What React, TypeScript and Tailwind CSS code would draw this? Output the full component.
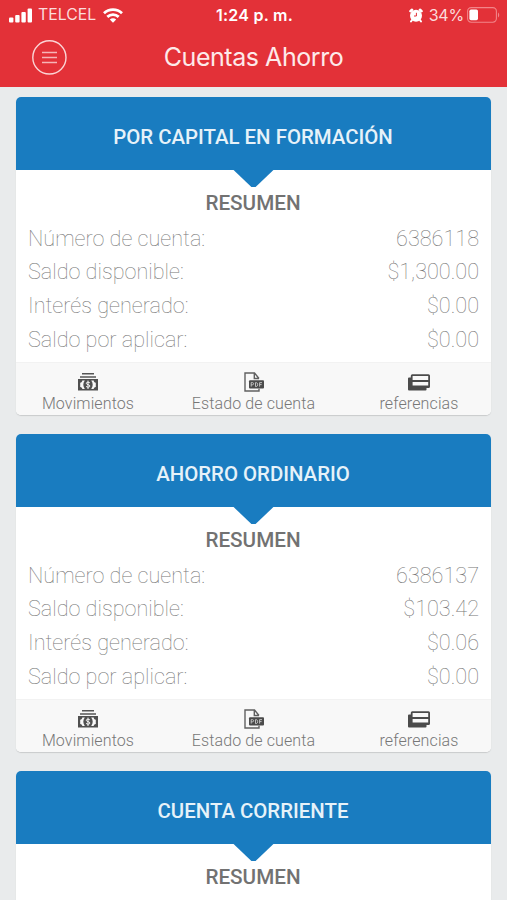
import React from "react";

type Account = { title: string; rows: [string, string][] };

const labels = ["Número de cuenta:", "Saldo disponible:", "Interés generado:", "Saldo por aplicar:"];

const build = (title: string, values: string[]): Account => ({
  title,
  rows: values.map((v, i) => [labels[i], v]),
});

const accounts: Account[] = [
  build("POR CAPITAL EN FORMACIÓN", ["6386118", "$1,300.00", "$0.00", "$0.00"]),
  build("AHORRO ORDINARIO", ["6386137", "$103.42", "$0.06", "$0.00"]),
  build("CUENTA CORRIENTE", []),
];

function SignalIcon() {
  return (
    <svg width="23" height="15" viewBox="0 0 23 15" fill="#fff">
      <rect x="0" y="9.5" width="4.4" height="5" rx="1" />
      <rect x="6.2" y="7" width="4.4" height="7.5" rx="1" />
      <rect x="12.4" y="4" width="4.4" height="10.5" rx="1" />
      <rect x="18.6" y="0.5" width="4.4" height="14" rx="1" />
    </svg>
  );
}

function WifiIcon() {
  return (
    <svg width="20" height="15" viewBox="0 0 20 15" fill="none" stroke="#fff" strokeWidth="2.8">
      <path d="M1 5.2C6 .5 14 .5 19 5.2" />
      <path d="M4.3 8.9c3.3-3 8.1-3 11.4 0" />
      <path d="M10 14.8 6.8 11.6c1.8-1.7 4.6-1.7 6.4 0Z" fill="#fff" stroke="none" />
    </svg>
  );
}

function AlarmIcon() {
  return (
    <svg width="14" height="15" viewBox="0 0 14 15" fill="none">
      <path d="M1.5 3.2 3 1.8M12.5 3.2 11 1.8" stroke="#fff" strokeWidth="2.6" strokeLinecap="round" />
      <path d="M3 12l-1 1.5M11 12l1 1.5" stroke="#fff" strokeWidth="2" strokeLinecap="round" />
      <circle cx="7" cy="7.7" r="6" fill="#fff" />
      <path d="M7.4 4.8V8H5" stroke="#e33138" strokeWidth="1" />
    </svg>
  );
}

function BatteryIcon() {
  return (
    <svg width="33" height="16" viewBox="0 0 33 16" fill="none">
      <rect x="0.6" y="0.6" width="28.8" height="14.6" rx="3.6" stroke="#f28589" strokeWidth="1.1" />
      <rect x="2.4" y="2.6" width="8.6" height="10.6" rx="1.6" fill="#fff" />
      <path d="M31 5.5c1.6.7 1.6 4.3 0 5Z" fill="#f28589" />
    </svg>
  );
}

function MenuIcon() {
  return (
    <svg width="36" height="36" viewBox="0 0 36 36" fill="none" stroke="#fbd5d6">
      <circle cx="18.4" cy="18.4" r="16.6" strokeWidth="1.4" />
      <path d="M11 13.5h15M11 18.5h15M11 23.5h15" stroke="#f6b5b7" strokeWidth="1.3" />
    </svg>
  );
}

function CashIcon() {
  return (
    <svg width="20" height="18" viewBox="0 0 20 18" fill="none">
      <path d="M4 .8h12M2 3.9h16" stroke="#555" strokeWidth="1.5" />
      <path d="M0 6h20v11.5H0Z" fill="#505050" />
      <path d="M4.3 7.6h2.5c-2 2.3-2 6 0 8.3H4.3c0-1-.8-1.9-2.1-2V9.7c1.3 0 2.1-1 2.1-2.1ZM15.7 7.6h-2.5c2 2.3 2 6 0 8.3h2.5c0-1 .8-1.9 2.1-2V9.7c-1.3 0-2.1-1-2.1-2.1Z" fill="#f8f8f8" />
      <path d="M11.9 9.9c-.7-.8-3.6-1.1-3.6.4 0 1.7 3.6 1 3.6 2.7 0 1.6-2.9 1.4-3.8.4M10 7.6v8.4" stroke="#f8f8f8" strokeWidth="1" />
    </svg>
  );
}

function PdfIcon() {
  return (
    <svg width="20" height="20" viewBox="0 0 20 20" fill="none">
      <path d="M15 6.5 10.5 1H1v18h14v-2.3M10.3 1v5.5H15" stroke="#606060" strokeWidth="1.4" />
      <rect x="5" y="8.3" width="15" height="8.2" rx="1" fill="#4b4b4b" />
      <path d="M7.2 14.6v-4h1.3c1.5 0 1.5 2.2 0 2.2H7.2M11.5 10.6v4h.8c1.8 0 1.8-4 0-4ZM15.6 14.6v-4H18M15.6 12.6h2" stroke="#ccc" strokeWidth=".9" />
    </svg>
  );
}

function CardsIcon() {
  return (
    <svg width="22" height="17" viewBox="0 0 22 17" fill="none">
      <path d="M0 4.5Q0 3.5 1 3.5H4V13h14.5v2.7q0 .8-1 .8H1q-1 0-1-1Z" fill="#4b4b4b" />
      <rect x="3.7" y="1.2" width="17.4" height="11.8" rx=".6" fill="#f8f8f8" stroke="#4b4b4b" strokeWidth="1.8" />
      <path d="M4 7h17" stroke="#4b4b4b" strokeWidth="2.2" />
      <path d="M4 12.3h17" stroke="#4b4b4b" strokeWidth="1.5" />
    </svg>
  );
}

const actions = [
  { label: "Movimientos", icon: <CashIcon />, width: "w-[144px]" },
  { label: "Estado de cuenta", icon: <PdfIcon />, width: "w-[187px]" },
  { label: "referencias", icon: <CardsIcon />, width: "w-[144px]" },
];

function AccountCard({ account }: { account: Account }) {
  return (
    <section className="h-[318px] shrink-0 overflow-hidden rounded-[5px] bg-white shadow-[0_1px_1px_#c9cbcc]">
      <h2 className="relative flex h-[73px] items-center justify-center bg-[#197cc0] pt-[7px] pr-[1px] text-[20.4px] font-medium text-[#e6f2f9]">
        {account.title}
        <span className="absolute top-[72px] left-1/2 h-[18px] w-[42px] -translate-x-1/2 bg-[#197cc0] [clip-path:polygon(0_0,100%_0,55%_100%,45%_100%)]" />
      </h2>
      <h3 className="flex h-[52px] items-center justify-center pt-[15px] pr-[1px] text-[20.7px] font-medium text-[#727272]">RESUMEN</h3>
      {account.rows.length > 0 && (
        <>
          <dl className="h-[140px] px-[12px]">
            {account.rows.map(([label, value]) => (
              <div key={label} className="flex h-[33.75px] items-center justify-between text-[21.65px] font-thin text-[#777]">
                <dt>{label}</dt>
                <dd>{value}</dd>
              </div>
            ))}
          </dl>
          <footer className="flex h-[53px] justify-between border-t border-[#f2f2f2] bg-[#f8f8f8]">
            {actions.map((a) => (
              <button key={a.label} className={"flex flex-col items-center justify-start " + a.width}>
                <span className="mt-[9px] flex h-[20px] shrink-0 items-center">{a.icon}</span>
                <span className="h-[23px] shrink-0 text-[16px] leading-[24px] font-light tracking-[0.12px] whitespace-nowrap text-[#777]">{a.label}</span>
              </button>
            ))}
          </footer>
        </>
      )}
    </section>
  );
}

export default function App() {
  return (
    <div className="flex h-[900px] w-full flex-col overflow-hidden bg-[#e9ebec] font-[Roboto,sans-serif]">
      <header className="h-[87px] shrink-0 bg-[#e33138] font-[Inter,sans-serif] text-white">
        <div className="grid h-[30px] grid-cols-3 items-center pr-[7px] pl-[9px]">
          <div className="flex items-center">
            <SignalIcon />
            <span className="ml-[6px] text-[15.8px] font-normal text-[#fbdcdc]">TELCEL</span>
            <span className="ml-[7px] flex"><WifiIcon /></span>
          </div>
          <span className="text-center text-[16px] font-semibold tracking-[0.25px]">1:24 p. m.</span>
          <div className="flex items-center justify-end">
            <AlarmIcon />
            <span className="mr-[3px] ml-[6px] text-[16px] tracking-[-0.2px] text-[#fbdcdc]">34%</span>
            <BatteryIcon />
          </div>
        </div>
        <div className="grid h-[54px] grid-cols-[1fr_auto_1fr] items-center px-[31px]">
          <button aria-label="Menú" className="w-[36px]"><MenuIcon /></button>
          <h1 className="pt-[1px] text-[25px] tracking-[-0.45px] text-[#fdeaea]">Cuentas Ahorro</h1>
        </div>
      </header>
      <main className="flex flex-1 flex-col gap-[19px] overflow-hidden px-[16px] pt-[10px]">
        {accounts.map((a) => <AccountCard key={a.title} account={a} />)}
      </main>
    </div>
  );
}
